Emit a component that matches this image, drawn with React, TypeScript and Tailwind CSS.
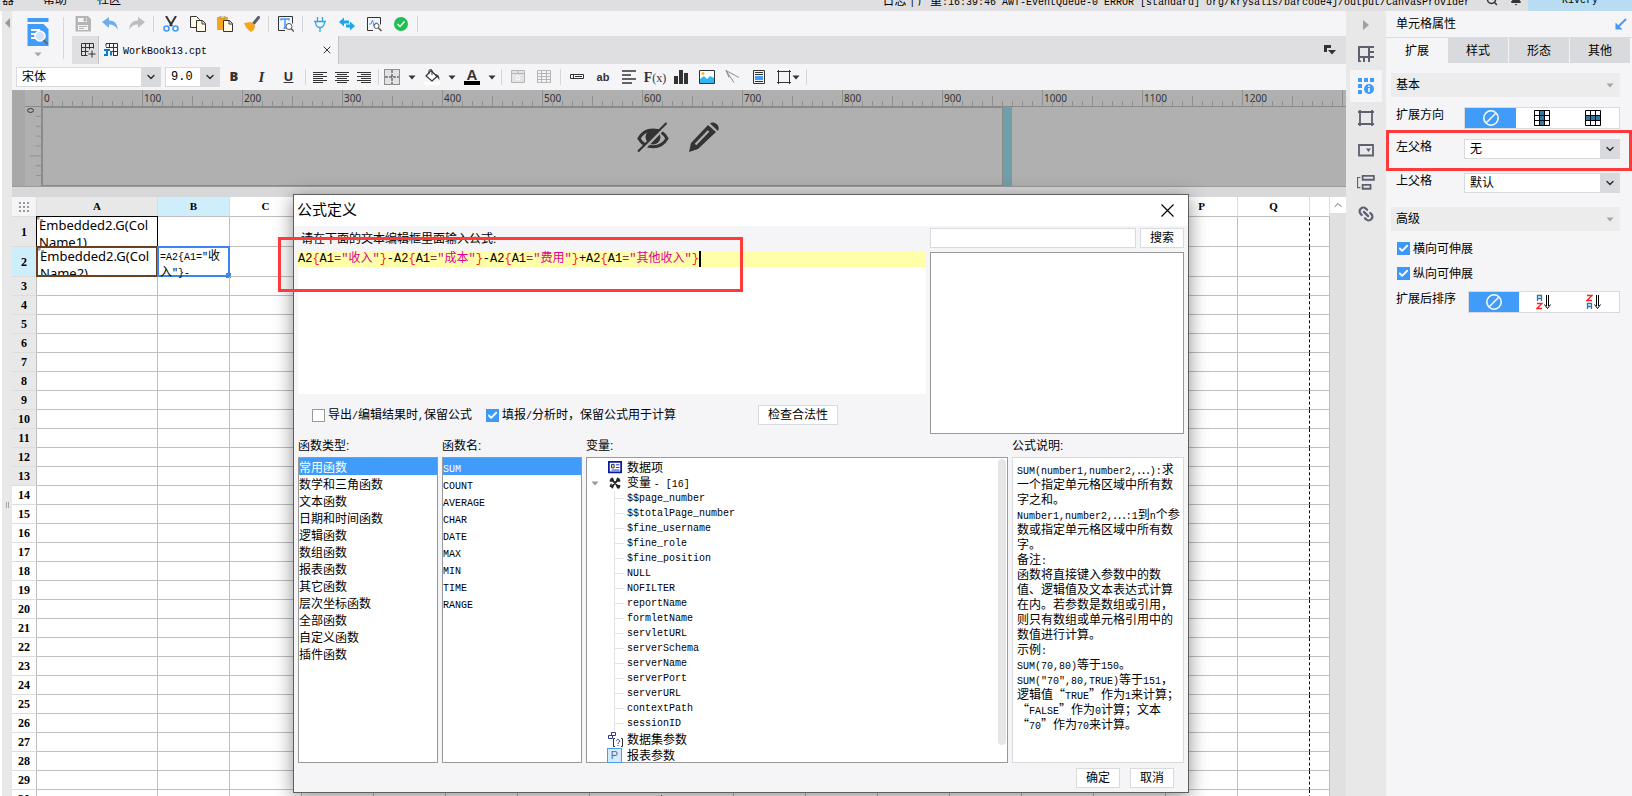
import type { ReactNode } from "react";
import { Bell, Check, ChevronDown, ChevronUp, Link2, Search, X } from "lucide-react";

const FUNCTION_TYPES = [
  "常用函数",
  "数学和三角函数",
  "文本函数",
  "日期和时间函数",
  "逻辑函数",
  "数组函数",
  "报表函数",
  "其它函数",
  "层次坐标函数",
  "全部函数",
  "自定义函数",
  "插件函数",
];

const FUNCTION_NAMES = ["SUM", "COUNT", "AVERAGE", "CHAR", "DATE", "MAX", "MIN", "TIME", "RANGE"];

const VARIABLES = [
  "$$page_number",
  "$$totalPage_number",
  "$fine_username",
  "$fine_role",
  "$fine_position",
  "NULL",
  "NOFILTER",
  "reportName",
  "formletName",
  "servletURL",
  "serverSchema",
  "serverName",
  "serverPort",
  "serverURL",
  "contextPath",
  "sessionID",
];

const DESCRIPTION = [
  "SUM(number1,number2,…):求",
  "一个指定单元格区域中所有数",
  "字之和。",
  "Number1,number2,…:1到n个参",
  "数或指定单元格区域中所有数",
  "字。",
  "备注:",
  "函数将直接键入参数中的数",
  "值、逻辑值及文本表达式计算",
  "在内。若参数是数组或引用，",
  "则只有数组或单元格引用中的",
  "数值进行计算。",
  "示例:",
  "SUM(70,80)等于150。",
  "SUM(\"70\",80,TRUE)等于151，",
  "逻辑值“TRUE”作为1来计算；",
  "“FALSE”作为0计算；文本",
  "“70”作为70来计算。",
];

const FORMULA = "A2{A1=\"收入\"}-A2{A1=\"成本\"}-A2{A1=\"费用\"}+A2{A1=\"其他收入\"}";

const COLUMNS = [..."ABCDEFGHIJKLMNOPQ", ""];
const ROWS = Array.from({ length: 30 }, (_, i) => i + 1);

/* Latin runs are set in a half-width face so that two letters take one Chinese character. */
function Mixed({ text }: { text: string }) {
  return (
    <>
      {text.split(/([\x21-\x7e]+(?: [\x21-\x7e]+)*)/).map((part, i) =>
        i % 2 ? (
          <span key={i} className="font-['Liberation_Mono',monospace] text-[10px]">
            {part}
          </span>
        ) : (
          <span key={i} className="font-['Noto_Sans_CJK_SC',sans-serif]">
            {part}
          </span>
        ),
      )}
    </>
  );
}

function Formula() {
  const parts = FORMULA.split(/("[^"]*"|[{}]|=)/);
  return (
    <>
      {parts.map((part, i) => {
        if (part.startsWith("\"")) return <span key={i} className="text-[#dc009c]">{part}</span>;
        if (part === "{" || part === "}") return <span key={i} className="text-[#ff2020]">{part}</span>;
        if (part === "=") return <span key={i} className="text-[#804040]">{part}</span>;
        return <span key={i}>{part}</span>;
      })}
    </>
  );
}

function Svg({ children, size = 16 }: { children: ReactNode; size?: number }) {
  return (
    <svg width={size} height={size} viewBox="0 0 16 16" fill="none" aria-hidden="true" className="shrink-0">
      {children}
    </svg>
  );
}

function ToolButton({ label, className, children }: { label: string; className: string; children: ReactNode }) {
  return (
    <button type="button" aria-label={label} className={`flex shrink-0 items-center justify-center ${className}`}>
      {children}
    </button>
  );
}

function Separator() {
  return (
    <div className="flex w-[7px] shrink-0 justify-center">
      <div className="h-4 w-px bg-[#d6d6d9]" />
    </div>
  );
}

function Caret({ className = "text-[#333333]" }: { className?: string }) {
  return (
    <svg width="8" height="5" viewBox="0 0 8 5" aria-hidden="true" className={className}>
      <path d="M0.500 0.500h7L4 4.500z" fill="currentColor" />
    </svg>
  );
}

function Select({ label, id, value, className }: { label: string; id: string; value: string; className: string }) {
  return (
    <div className={`relative h-5 ${className}`}>
      <select
        id={id}
        aria-label={label}
        className="h-full w-full appearance-none border border-[#d9dadd] bg-white pl-[5px] text-[12px] leading-4"
      >
        <option>{value}</option>
      </select>
      <span className="pointer-events-none absolute inset-y-0 right-0 flex w-5 items-center justify-center bg-[#d9dadd]">
        <ChevronDown className="h-3 w-3 text-[#333333]" strokeWidth={3} />
      </span>
    </div>
  );
}

function CheckBox({ id, label, checked }: { id: string; label: string; checked?: boolean }) {
  return (
    <div className="flex items-center gap-[3px]">
      <span className="relative h-[13px] w-[13px]">
        <input
          id={id}
          type="checkbox"
          defaultChecked={checked}
          className="peer block h-full w-full appearance-none border border-[#999999] bg-white checked:border-[#3d98f7] checked:bg-[#3d98f7]"
        />
        <Check className="pointer-events-none absolute inset-0 hidden h-[13px] w-[13px] p-px text-white peer-checked:block" strokeWidth={4} />
      </span>
      <label htmlFor={id} className="leading-4">
        <Mixed text={label} />
      </label>
    </div>
  );
}

function TopBar() {
  return (
    <header className="-mt-[11px] flex h-[22px] shrink-0 items-center bg-[#dfdfe1] pl-[2px]">
      <a href="#server" className="w-[41px]">器</a>
      <a href="#help" className="w-[54px]">帮助</a>
      <a href="#community">社区</a>
      <div className="flex flex-1 items-center justify-end">
        <span className="pr-4 whitespace-pre">
          <Mixed text="日志 | 严重:16:39:46 AWT-EventQueue-0 ERROR [standard] org/krysalis/barcode4j/output/CanvasProvider" />
        </span>
        <Search className="mr-3 h-3 w-3 text-[#333333]" strokeWidth={3} />
        <Bell className="mr-[6px] h-3 w-3 fill-[#333333] text-[#333333]" />
      </div>
      <div className="flex h-full w-[104px] items-center justify-center bg-[#b8dcf1]">
        <Mixed text="Rivery" />
      </div>
    </header>
  );
}

function MainToolbar() {
  return (
    <div className="flex h-[25px] items-center">
      <ToolButton label="保存" className="w-[27px]">
        <Svg>
          <path d="M1 0h12l3 3v12.500h-15.500v-15z" fill="#b5b5b5" />
          <path d="M3 2h9v4h-9zM3 9h10v5h-10z" fill="#f5f5f8" />
          <path d="M9 2h2v3h-2zM4 10.500h8M4 12.500h5" stroke="#b5b5b5" fill="#b5b5b5" />
        </Svg>
      </ToolButton>
      <ToolButton label="撤销" className="w-[27px]">
        <Svg>
          <path d="M0 6l7-5v3.500c5 0 9 3 8.500 9.500C14 10 11 8.500 7 8.500V12z" fill="#6caeec" />
        </Svg>
      </ToolButton>
      <ToolButton label="恢复" className="w-[27px]">
        <Svg>
          <path d="M16 6L9 1v3.500C4 4.500 0 7.500 0.500 14 2 10 5 8.500 9 8.500V12z" fill="#bdbdbd" />
        </Svg>
      </ToolButton>
      <Separator />
      <ToolButton label="剪切" className="w-[27px]">
        <Svg>
          <path d="M3 0l6 10M13 0L7 10" stroke="#333333" strokeWidth="2" />
          <circle cx="3.500" cy="12.500" r="2.500" stroke="#419bf9" strokeWidth="1.600" />
          <circle cx="12.500" cy="12.500" r="2.500" stroke="#419bf9" strokeWidth="1.600" />
        </Svg>
      </ToolButton>
      <ToolButton label="复制" className="w-[27px]">
        <Svg>
          <path d="M0.500 0.500h6l3 3v8h-9z" fill="#fffbe8" stroke="#333333" />
          <path d="M6.500 4.500h6l3 3v8h-9z" fill="#fffbe8" stroke="#333333" />
          <path d="M12 4.500v3.500h3.500" stroke="#333333" />
        </Svg>
      </ToolButton>
      <ToolButton label="粘贴" className="w-[27px]">
        <Svg>
          <path d="M0 1h11v13H0z" fill="#f5a71c" />
          <path d="M3 0h5v2H3z" fill="#fff" stroke="#8a5a10" strokeWidth="0.600" />
          <path d="M6.500 4.500h6l3 3v8h-9z" fill="#fffbe8" stroke="#333333" />
          <path d="M12 4.500v3.500h3.500" stroke="#333333" />
        </Svg>
      </ToolButton>
      <ToolButton label="格式刷" className="w-[27px]">
        <Svg>
          <path d="M14.500 1.500L10 7" stroke="#5a5f70" strokeWidth="3" strokeLinecap="round" />
          <path d="M0 7l7-1 4 3c0 4-2 6-4 7-3-2-6-5-7-9z" fill="#f5a71c" />
        </Svg>
      </ToolButton>
      <Separator />
      <ToolButton label="查找" className="w-[27px]">
        <Svg>
          <path d="M7 14.500H0.500V0.500h14v7" stroke="#333333" />
          <path d="M3 4.500V3h8v1.500M7 3v9M5.500 12h3" stroke="#419bf9" strokeWidth="1.500" />
          <circle cx="11" cy="10.500" r="3" fill="#fff" stroke="#555555" />
          <path d="M13 12.500l3 3" stroke="#555555" strokeWidth="1.500" />
        </Svg>
      </ToolButton>
      <Separator />
      <ToolButton label="连接" className="w-[27px]">
        <Svg>
          <path d="M5.500 1v4M10.500 1v4M2 5.500h12M3.500 5.500c0 4 1.500 6 4.500 6s4.500-2 4.500-6M8 11.500V16" stroke="#2ba5e8" strokeWidth="1.300" />
        </Svg>
      </ToolButton>
      <ToolButton label="同步" className="w-[27px]">
        <Svg>
          <path d="M0 6l5-4.500V4.500h5v3H5v3zM16 10l-5 4.500v-3H7v-3h4v-3z" fill="#1aa7ee" />
        </Svg>
      </ToolButton>
      <ToolButton label="监控" className="w-[27px]">
        <Svg>
          <path d="M7 14.500H1.500V1.500h13v7" stroke="#333333" />
          <path d="M3 8h2l1.500-4L8 10l1.500-3h2" stroke="#419bf9" />
          <circle cx="10.500" cy="10" r="2.500" fill="#fff" stroke="#555555" />
          <path d="M12.500 12l3 3" stroke="#555555" strokeWidth="1.500" />
        </Svg>
      </ToolButton>
      <ToolButton label="检测" className="w-[27px]">
        <Svg>
          <circle cx="8" cy="8" r="7" fill="#1fbf54" />
          <path d="M4.500 8l2.500 2.500 4.500-5" stroke="#fff" strokeWidth="1.500" />
        </Svg>
      </ToolButton>
      <Separator />
    </div>
  );
}

function TabBar() {
  return (
    <div className="flex h-7 items-stretch bg-[#dfdfe1]">
      <button type="button" aria-label="新建" className="flex w-[26px] items-center justify-center pl-[6px]">
        <Svg>
          <path d="M1.500 1.500h12v5M1.500 1.500v12h6M1.500 5.500h12M1.500 9.500h7M5.500 1.500v12M9.500 1.500v6M12 8.500v7M8.500 12h7" stroke="#333333" />
        </Svg>
      </button>
      <div className="flex w-[241px] items-center border-x border-[#c4c4c8] bg-[#f5f5f8] pr-[5px] pl-1">
        <Svg>
          <path d="M3 1.500h11.500v12H10M6.500 1.500v4M10.500 1.500v12M3 1.500v3M3 5.500h11.500M9 9.500h5.500" stroke="#333333" />
          <path d="M1 7h6v2H5v5H1v-2h2V9H1zM7 9h2v4.500H7z" fill="#0d79c9" />
        </Svg>
        <span className="flex-1 pl-1 leading-4">
          <Mixed text="WorkBook13.cpt" />
        </span>
        <button type="button" aria-label="关闭标签" className="flex h-3 w-3 items-center justify-center">
          <X className="h-3 w-3 text-[#333333]" strokeWidth={2} />
        </button>
      </div>
      <div className="flex flex-1 items-center justify-end pr-[9px]">
        <button type="button" aria-label="标签列表">
          <Svg>
            <path d="M3 3h7v3H6v4H3zM7 8h8l-4 4.500z" fill="#333333" />
          </Svg>
        </button>
      </div>
    </div>
  );
}

function AlignIcon({ inner }: { inner: string }) {
  return (
    <Svg>
      <path d={`M1 3.500h14M1 7.500h14M1 11.500h14${inner}`} stroke="#333333" />
    </Svg>
  );
}

function FormatBar() {
  return (
    <div className="flex h-[26px] items-center pl-1">
      <Select id="font-family" label="字体" value="宋体" className="w-[145px]" />
      <Select id="font-size" label="字号" value="9.0" className="ml-1 w-[55px] font-['Liberation_Mono',monospace]" />
      <ToolButton label="粗体" className="w-7">
        <span className="font-['Noto_Sans',sans-serif] text-[13px] font-black text-[#333333]">B</span>
      </ToolButton>
      <ToolButton label="斜体" className="w-[27px]">
        <span className="font-['Liberation_Serif',serif] text-[15px] font-bold text-[#333333] italic">I</span>
      </ToolButton>
      <ToolButton label="下划线" className="w-[27px]">
        <span className="font-['Noto_Sans',sans-serif] text-[13px] font-bold text-[#333333] underline">U</span>
      </ToolButton>
      <Separator />
      <ToolButton label="左对齐" className="w-[22px]">
        <AlignIcon inner="M1 5.500h10M1 9.500h10M1 13.500h10" />
      </ToolButton>
      <ToolButton label="居中" className="w-[22px]">
        <AlignIcon inner="M3 5.500h10M3 9.500h10M3 13.500h10" />
      </ToolButton>
      <ToolButton label="右对齐" className="w-[22px]">
        <AlignIcon inner="M5 5.500h10M5 9.500h10M5 13.500h10" />
      </ToolButton>
      <Separator />
      <div className="flex gap-1">
        <ToolButton label="边框" className="w-9 gap-2">
          <Svg>
            <path d="M0.500 0.500h15v15h-15z" fill="#e3e3e5" stroke="#333333" strokeDasharray="1 1" />
            <path d="M1 8h14M8 1v14" stroke="#333333" strokeDasharray="3 1" />
          </Svg>
          <Caret />
        </ToolButton>
        <ToolButton label="背景色" className="w-9 gap-2">
          <Svg>
            <path d="M7 1.500l6 6-5 4.500-6-5z" fill="#fff" stroke="#333333" strokeWidth="1.200" />
            <path d="M5 5V1.500c0-1.500 3-1.500 3 0V6" stroke="#333333" />
            <path d="M11 5c3 0 4.500 2 4.500 6l-2-2.500z" fill="#333333" />
            <path d="M0 13h16v3H0z" fill="#fff" />
          </Svg>
          <Caret />
        </ToolButton>
        <ToolButton label="字体颜色" className="w-9 gap-2">
          <span className="flex h-4 w-4 items-center justify-center border-b-4 border-black text-[15px] leading-3 font-bold text-[#333333]">A</span>
          <Caret />
        </ToolButton>
      </div>
      <Separator />
      <ToolButton label="合并" className="w-[26px]">
        <Svg>
          <path d="M1.500 1.500h13v12h-13zM1.500 4.500h13M8 1.500v3" fill="#e3e3e5" stroke="#b5b5b5" />
          <circle cx="8" cy="9" r="2" stroke="#ffffff" />
        </Svg>
      </ToolButton>
      <ToolButton label="拆分" className="w-[26px]">
        <Svg>
          <path d="M1.500 1.500h13v12h-13zM1.500 4.500h13M1.500 7.500h13M1.500 10.500h13M5.500 1.500v12M10.500 1.500v12" stroke="#b5b5b5" />
        </Svg>
      </ToolButton>
      <Separator />
      <ToolButton label="控件" className="w-[26px]">
        <Svg>
          <path d="M1.500 5.500h13v4h-13zM4.500 5.500v4M6 7.500h7" stroke="#333333" />
        </Svg>
      </ToolButton>
      <ToolButton label="文本" className="w-[26px]">
        <span className="text-[11px] font-bold text-[#333333]">ab</span>
      </ToolButton>
      <ToolButton label="富文本" className="w-[26px]">
        <Svg>
          <path d="M1 2h14M1 6h9M1 10h14M1 14h10" stroke="#333333" strokeWidth="1.500" />
        </Svg>
      </ToolButton>
      <ToolButton label="公式" className="w-[26px]">
        <span className="font-['Liberation_Serif',serif] text-[#333333]">
          <span className="text-[14px] font-bold">F</span>
          <span className="text-[12px]">(x)</span>
        </span>
      </ToolButton>
      <ToolButton label="图表" className="w-[26px]">
        <Svg>
          <path d="M1 7h4v8H1zM6 1h4v14H6zM11 4h4v11h-4z" fill="#333333" />
        </Svg>
      </ToolButton>
      <ToolButton label="图片" className="w-[26px]">
        <Svg>
          <path d="M0.500 1.500h15v13H0.500z" fill="#fff" stroke="#333333" />
          <path d="M1 14v-4l4-3 3 3 3-3 4 2v5z" fill="#2fb5f5" />
          <circle cx="4" cy="4.500" r="1.500" fill="#f7b733" />
        </Svg>
      </ToolButton>
      <ToolButton label="斜线" className="w-[26px]">
        <Svg>
          <path d="M1 1.500l13 7M1 1.500l8 12M1 1.500l3 7" stroke="#8c8c8c" />
        </Svg>
      </ToolButton>
      <ToolButton label="子报表" className="w-[26px]">
        <Svg>
          <path d="M2.500 1.500h11v13h-11zM4 3.500h8M4 5.500h8M4 12.500h8" stroke="#333333" />
          <path d="M4 7h8v4H4z" fill="#419bf9" />
        </Svg>
      </ToolButton>
      <ToolButton label="形状" className="w-[31px]">
        <Svg>
          <path d="M2.500 1v14M13.500 1v14M1 2.500h14M1 13.500h14" stroke="#333333" />
        </Svg>
        <Caret />
      </ToolButton>
      <Separator />
    </div>
  );
}

function Ruler() {
  const ticks = Array.from({ length: 140 }, (_, i) => i);
  const path = ticks
    .map((i) => `M${i * 10 + 0.5} ${i % 10 === 0 ? 0 : i % 5 === 0 ? 6 : 11}V16`)
    .join("");
  return (
    <div className="relative h-[17px] overflow-hidden border-b border-[#8a8a8a]">
      <svg height="16" width="1400" viewBox="0 0 1400 16" aria-hidden="true" className="absolute top-0 left-0">
        <path d={path} stroke="#8f8f8f" />
      </svg>
      <div className="flex font-['Noto_Sans',sans-serif] text-[10px] leading-4 text-[#333333]">
        {ticks.slice(0, 13).map((i) => (
          <span key={i} className="w-[100px] shrink-0 pl-[2px]">
            {i * 100}
          </span>
        ))}
      </div>
    </div>
  );
}

function Canvas() {
  return (
    <section className="flex h-[97px] shrink-0 overflow-hidden border-b border-[#999999] bg-[#a8a8a8] pl-[13px]">
      <div className="w-4 shrink-0 bg-[#b0b0b0] pt-4">
        <svg width="16" height="80" viewBox="0 0 16 80" aria-hidden="true" className="border-t border-[#8a8a8a]">
          <path d="M11 9.500h5M11 19.500h5M11 29.500h5M11 39.500h5M5 49.500h11M11 59.500h5M11 69.500h5" stroke="#8f8f8f" />
          <ellipse cx="5.500" cy="3.500" rx="3" ry="2" fill="none" stroke="#333333" />
        </svg>
      </div>
      <div className="flex min-w-0 flex-1 flex-col border-l border-[#8a8a8a] bg-[#b0b0b0]">
        <Ruler />
        <div className="flex flex-1">
          <div className="flex w-[961px] items-center justify-center gap-[19px] border border-[#8a8a8a] pb-5 pl-[312px]">
            <button type="button" aria-label="隐藏" className="text-[#333333]">
              <svg width="32" height="30" viewBox="0 0 32 30" fill="none" aria-hidden="true">
                <path d="M2 16.500C8 5 24 5 30 16.500 24 27.500 8 27.500 2 16.500z" stroke="currentColor" strokeWidth="3" />
                <circle cx="16" cy="15" r="7.500" fill="currentColor" />
                <path d="M2.500 31L31 2" stroke="#b0b0b0" strokeWidth="3" />
                <path d="M1 29.500L29.500 1" stroke="currentColor" strokeWidth="2.200" />
              </svg>
            </button>
            <button type="button" aria-label="编辑" className="text-[#333333]">
              <svg width="32" height="30" viewBox="0 0 32 30" fill="none" aria-hidden="true">
                <path d="M1 30l2-9L20 3l8 7L10 27z" fill="currentColor" />
                <path d="M7.500 22.500L20.500 9" stroke="#b0b0b0" strokeWidth="2.200" />
                <path d="M22 1.500c3-3 11 1 8 7.500z" fill="currentColor" />
              </svg>
            </button>
          </div>
          <div className="w-[9px] bg-[#6f9fac]" />
        </div>
      </div>
    </section>
  );
}

function HeaderCell({ name }: { name: string }) {
  const tone = name === "B" ? "bg-[#cfeefb]" : name === "A" ? "bg-[#e8e8e8]" : "bg-white";
  return (
    <th className={`border-r border-b border-r-[#dcdcdc] border-b-[#bfbfbf] p-0 font-['Liberation_Serif',serif] text-[11px] font-bold ${tone}`}>
      {name}
    </th>
  );
}

function CellContent({ cell }: { cell: string }) {
  if (cell === "A1" || cell === "A2") {
    return (
      <div
        className={`absolute -inset-px overflow-hidden pl-[2px] font-['Noto_Sans',sans-serif] text-[13px] leading-[17px] whitespace-nowrap ${
          cell === "A1" ? "border border-black" : "border-2 border-[#6b4020]"
        }`}
      >
        Embedded2.G(Col
        <br />
        Name{cell === "A1" ? "1" : "2"})
        <svg width="6" height="6" viewBox="0 0 6 6" aria-hidden="true" className="absolute top-0 left-0">
          <path d="M0 1h3M1 0v3M3 3l3 0M5 2v3" stroke="#777777" />
        </svg>
      </div>
    );
  }
  if (cell === "B2") {
    return (
      <div className="absolute -inset-px border-2 border-[#3a85f0] pl-px text-[12px] leading-[13px]">
        <Mixed text={"=A2{A1=\"收"} />
        <br />
        <Mixed text={"入\"}-"} />
        <span className="absolute -right-[3px] -bottom-[3px] h-[5px] w-[5px] bg-[#3a85f0]" />
      </div>
    );
  }
  return null;
}

function Sheet() {
  return (
    <div className="flex min-h-0 flex-1 bg-white">
      <div className="min-w-0 flex-1 overflow-hidden">
        <table className="w-full table-fixed border-separate border-spacing-0">
          <colgroup>
            <col className="w-[25px]" />
            <col className="w-[121px]" />
            {COLUMNS.slice(1, -1).map((c) => (
              <col key={c} className="w-[72px]" />
            ))}
            <col />
          </colgroup>
          <thead>
            <tr className="h-5">
              <th className="border-r border-b border-[#dcdcdc] bg-[#f5f5f8] p-0">
                <svg width="12" height="10" viewBox="0 0 12 10" aria-label="全选" className="mx-auto">
                  <path d="M1 1h2M5 1h2M9 1h2M1 5h2M5 5h2M9 5h2M1 9h2M5 9h2M9 9h2" stroke="#999999" strokeWidth="2" />
                </svg>
              </th>
              {COLUMNS.map((c) => (
                <HeaderCell key={c} name={c} />
              ))}
            </tr>
          </thead>
          <tbody>
            {ROWS.map((r) => (
              <tr key={r} className={r < 3 ? "h-[30px]" : "h-[19px]"}>
                <th
                  className={`border-r border-b border-r-[#bfbfbf] border-b-[#dcdcdc] p-0 font-['Liberation_Serif',serif] text-[12px] leading-4 font-bold ${
                    r === 2 ? "bg-[#cfeefb]" : r < 14 ? "bg-[#e8e8e8]" : "bg-white"
                  }`}
                >
                  {r}
                </th>
                {COLUMNS.map((c) => (
                  <td
                    key={c}
                    className={`relative border-r border-b border-b-[#bfbfbf] p-0 ${
                      c === "Q" || c === "H" ? "border-r-black [border-right-style:dashed]" : "border-r-[#bfbfbf]"
                    }`}
                  >
                    <CellContent cell={c + r} />
                  </td>
                ))}
              </tr>
            ))}
          </tbody>
        </table>
      </div>
      <div className="w-4 bg-[#e0e0e0]">
        <button type="button" aria-label="向上滚动" className="flex h-4 w-full items-center justify-center bg-white">
          <ChevronUp className="h-3 w-3 text-[#666666]" strokeWidth={2} />
        </button>
      </div>
    </div>
  );
}

function Editor() {
  return (
    <main className="flex min-w-0 flex-1 flex-col bg-[#f5f5f8]">
      <div className="flex">
        <div className="flex w-[57px] justify-end pt-[6px]">
          <button type="button" aria-label="预览" className="flex flex-1 flex-col items-center gap-[6px]">
            <svg width="22" height="29" viewBox="0 0 22 29" fill="none" aria-hidden="true">
              <path d="M0.500 1h21v4H0.500zM0.500 7h16l5 5v17H0.500z" fill="#419bf9" />
              <path d="M4 13h9M4 17h5M4 21h5" stroke="#fff" strokeWidth="2" />
              <circle cx="13" cy="19" r="5" fill="#cfe4fb" stroke="#fff" strokeWidth="1.500" />
              <path d="M16.500 23l4 4" stroke="#5f6b7a" strokeWidth="2" />
            </svg>
            <Caret className="text-[#a5a5a5]" />
          </button>
          <div className="mr-[5px] h-[42px] w-px bg-[#d6d6d9]" />
        </div>
        <div className="min-w-0 flex-1">
          <MainToolbar />
          <div className="pl-[3px]">
            <TabBar />
          </div>
        </div>
      </div>
      <FormatBar />
      <Canvas />
      <div className="h-[10px] shrink-0 bg-[#d8d8da]" />
      <Sheet />
    </main>
  );
}

function SideIcons() {
  return (
    <nav className="flex w-10 shrink-0 flex-col items-center bg-[#e8e8e8] text-[#5c6070]">
      <button type="button" aria-label="收起" className="flex h-[27px] items-center">
        <svg width="6" height="10" viewBox="0 0 6 10" aria-hidden="true">
          <path d="M0 0l6 5-6 5z" fill="#a0a0a0" />
        </svg>
      </button>
      <ToolButton label="单元格元素" className="h-8 w-8">
        <Svg>
          <path d="M1 16V1h15M1 11h10V1M11 6h5M11 11h5M6 11v5M11 11v5M1 15.500h2" stroke="currentColor" strokeWidth="2" />
        </Svg>
      </ToolButton>
      <ToolButton label="单元格属性" className="h-8 w-8 bg-[#f5f5f8]">
        <Svg>
          <path d="M0 0h4v4H0zM6 0h4v4H6zM12 0h4v4h-4zM0 6h4v4H0zM0 12h4v4H0z" fill="#419bf9" />
          <circle cx="11" cy="11" r="5" fill="#419bf9" />
          <path d="M11 7.500v1.500M11 10v4" stroke="#fff" strokeWidth="1.600" />
        </Svg>
      </ToolButton>
      <ToolButton label="悬浮元素" className="h-8 w-8">
        <Svg>
          <path d="M2 0v16M14 0v16M0 2h16M0 14h16" stroke="currentColor" strokeWidth="1.800" />
        </Svg>
      </ToolButton>
      <ToolButton label="控件设置" className="h-8 w-8">
        <Svg>
          <path d="M1 3h14v10.500H1z" stroke="currentColor" strokeWidth="1.800" />
          <path d="M8 6.500h5l-2.500 3.500z" fill="currentColor" />
        </Svg>
      </ToolButton>
      <ToolButton label="条件属性" className="h-8 w-8">
        <Svg size={18}>
          <path d="M3 4H0.500v9H3" stroke="currentColor" />
          <path d="M5 2.500h10v3.500H5zM5 10.500h7v3.500H5z" stroke="currentColor" strokeWidth="1.600" />
        </Svg>
      </ToolButton>
      <ToolButton label="超级链接" className="h-8 w-8">
        <Link2 className="h-[18px] w-[18px] rotate-45" strokeWidth={3} />
      </ToolButton>
    </nav>
  );
}

function SectionTitle({ children }: { children: ReactNode }) {
  return (
    <button type="button" className="flex h-6 w-full items-center justify-between bg-[#ececec] pr-[6px] pl-[5px] text-left">
      {children}
      <Caret className="text-[#a5a5a5]" />
    </button>
  );
}

function Segments({ children, className }: { children: ReactNode; className: string }) {
  return (
    <div className={`flex h-[22px] border border-[#d9dadd] bg-white ${className}`}>
      <button type="button" aria-label="不扩展" className="flex flex-1 items-center justify-center bg-[#419bf9]">
        <Svg>
          <circle cx="8" cy="8" r="7.200" stroke="#fff" strokeWidth="1.500" />
          <path d="M3.500 12.500l9-9" stroke="#fff" strokeWidth="1.500" />
        </Svg>
      </button>
      {children}
    </div>
  );
}

function SortIcon({ reverse }: { reverse?: boolean }) {
  const a = "M1.500 7V1.500h4V7M1.500 4.500h4";
  const z = "M1 1.500h5L1 6.500h5";
  return (
    <Svg>
      <path d={reverse ? z : a} stroke={reverse ? "#ff2020" : "#2f78a8"} strokeWidth="1.300" />
      <g transform="translate(0 8)">
        <path d={reverse ? a : z} stroke={reverse ? "#2f78a8" : "#ff2020"} strokeWidth="1.300" />
      </g>
      <path d="M10.500 1v11M12.500 1v11M8.500 10.500l3 4 3-4" stroke="#000" />
    </Svg>
  );
}

function PropertyPanel() {
  return (
    <aside className="w-[246px] shrink-0 bg-[#f5f5f8]">
      <div className="flex h-[27px] items-center justify-between border-b border-[#dcdcdf] pr-[5px] pl-[10px]">
        <h2>单元格属性</h2>
        <svg width="12" height="12" viewBox="0 0 12 12" fill="none" aria-hidden="true">
          <path d="M11 1L3 9" stroke="#419bf9" strokeWidth="2" />
          <path d="M0.500 4.500v7h7z" fill="#419bf9" />
        </svg>
      </div>
      <div className="flex h-[25px] gap-px pr-[2px] pl-px" role="tablist">
        <button type="button" role="tab" aria-selected="true" className="flex-1">扩展</button>
        {["样式", "形态", "其他"].map((tab) => (
          <button key={tab} type="button" role="tab" aria-selected="false" className="flex-1 bg-[#d9dadd]">
            {tab}
          </button>
        ))}
      </div>
      <div className="pt-[10px] pr-3 pl-[5px]">
        <SectionTitle>基本</SectionTitle>
        <div className="flex items-start pt-[10px] pl-[5px]">
          <span className="w-[68px] leading-4">扩展方向</span>
          <Segments className="flex-1">
            <button type="button" aria-label="纵向" className="flex flex-1 items-center justify-center">
              <Svg>
                <path d="M5.500 0h5v16h-5z" fill="#2f78a8" />
                <path d="M0.500 0.500h15v15H0.500zM5.500 0.500v15M10.500 0.500v15M0.500 5.500h15M0.500 10.500h15" stroke="#000" />
              </Svg>
            </button>
            <button type="button" aria-label="横向" className="flex flex-1 items-center justify-center">
              <Svg>
                <path d="M0 5.500h16v5H0z" fill="#2f78a8" />
                <path d="M0.500 0.500h15v15H0.500zM5.500 0.500v15M10.500 0.500v15M0.500 5.500h15M0.500 10.500h15" stroke="#000" />
              </Svg>
            </button>
          </Segments>
        </div>
      </div>
      <div className="mt-px h-[41px] border-[3px] border-[#ff3a3a] pt-[6px] pr-[9px] pl-[7px]">
        <div className="flex items-start">
          <label htmlFor="left-parent" className="w-[68px] leading-4">左父格</label>
          <Select id="left-parent" label="左父格" value="无" className="flex-1" />
        </div>
      </div>
      <div className="pt-[2px] pr-3 pl-[5px]">
        <div className="flex items-start pb-[14px] pl-[5px]">
          <label htmlFor="top-parent" className="w-[68px] leading-4">上父格</label>
          <Select id="top-parent" label="上父格" value="默认" className="flex-1" />
        </div>
        <SectionTitle>高级</SectionTitle>
        <div className="flex flex-col gap-2 pt-[9px] pl-[6px]">
          <CheckBox id="extend-h" label="横向可伸展" checked />
          <CheckBox id="extend-v" label="纵向可伸展" checked />
        </div>
        <div className="flex items-start pt-[9px] pl-[5px]">
          <span className="w-[72px] leading-4">扩展后排序</span>
          <Segments className="flex-1">
            <button type="button" aria-label="升序" className="flex flex-1 items-center justify-center">
              <SortIcon />
            </button>
            <button type="button" aria-label="降序" className="flex flex-1 items-center justify-center">
              <SortIcon reverse />
            </button>
          </Segments>
        </div>
      </div>
    </aside>
  );
}

function OptionList({ items }: { items: string[] }) {
  return (
    <ul className="h-[306px] border border-[#999999] bg-white">
      {items.map((item, i) => (
        <li key={item}>
          <button
            type="button"
            className={`block h-[17px] w-full text-left leading-[17px] ${i === 0 ? "bg-[#419bf9] text-white" : ""}`}
          >
            <Mixed text={item} />
          </button>
        </li>
      ))}
    </ul>
  );
}

function TreeRow({ icon, label, open }: { icon: ReactNode; label: string; open?: boolean }) {
  return (
    <div className="flex h-4 items-center">
      <span className="flex w-[15px] justify-center">{open && <Caret className="text-[#999999]" />}</span>
      <span className="flex w-[25px] justify-center">{icon}</span>
      <span className="leading-4">
        <Mixed text={label} />
      </span>
    </div>
  );
}

function VariableTree() {
  return (
    <div className="flex h-[306px] justify-between border border-[#999999] bg-white pr-px">
      <div className="pt-px">
        <TreeRow
          label="数据项"
          icon={
            <Svg size={14}>
              <path d="M1 2h14v12H1z" fill="#fff" stroke="#0a1aa0" strokeWidth="2" />
              <path d="M4 5h3v4H4z" fill="#f4e04d" stroke="#0a1aa0" />
              <path d="M9 5.500h4M9 8.500h4M4 11.500h9" stroke="#0a1aa0" />
            </Svg>
          }
        />
        <TreeRow
          open
          label="变量 - [16]"
          icon={
            <Svg size={12}>
              <path d="M4 1l2 5 4 4 2 5M12 1l-2 5-4 4-2 5M1 5h4M11 5h4M1 12h4M11 12h4" stroke="#222222" strokeWidth="2.500" />
              <circle cx="3" cy="3" r="1.500" fill="#222222" />
              <circle cx="13" cy="3" r="1.500" fill="#222222" />
              <circle cx="3" cy="10" r="1.500" fill="#2a6a4a" />
              <circle cx="13" cy="14" r="1.500" fill="#222222" />
            </Svg>
          }
        />
        <ul className="ml-[27px] border-l border-[#e3e3e3]">
          {VARIABLES.map((name) => (
            <li key={name} className="flex h-[15px] items-center">
              <span className="mr-[3px] h-px w-[9px] bg-[#e3e3e3]" />
              <Mixed text={name} />
            </li>
          ))}
        </ul>
        <TreeRow
          label="数据集参数"
          icon={
            <Svg>
              <path d="M4.500 1.500h4v3h-4zM1.500 4.500h4v3h-4z" stroke="#2f3a9a" fill="#fff" />
              <path d="M8 7.500H6.500v8H8M14 7.500h1.500v8H14" stroke="#333333" />
              <path d="M9.500 10c0-2 3-2 3 0s-1.500 1-1.500 3M11 14v1" stroke="#2f3a9a" />
            </Svg>
          }
        />
        <TreeRow
          label="报表参数"
          icon={
            <span className="flex h-[15px] w-[15px] items-center justify-center border border-[#419bf9] bg-[#d5ebfb] text-[11px] leading-3 text-[#5f6b7a]">
              P
            </span>
          }
        />
      </div>
      <div className="mt-px h-[286px] w-2 rounded bg-[#e6e6e6]" />
    </div>
  );
}

function DialogButton({ children, className }: { children: ReactNode; className: string }) {
  return (
    <button type="button" className={`h-5 shrink-0 border border-[#d9dadd] bg-white leading-4 ${className}`}>
      {children}
    </button>
  );
}

function FormulaDialog() {
  return (
    <div
      role="dialog"
      aria-label="公式定义"
      className="absolute top-[194px] left-[293px] w-[896px] border border-[#5f5f5f] bg-[#f5f5f8] shadow-[0_4px_18px_rgba(0,0,0,0.45)]"
    >
      <div className="flex h-[31px] items-center justify-between bg-white pr-[14px] pl-[3px]">
        <h1 className="text-[15px]">公式定义</h1>
        <button type="button" aria-label="关闭">
          <svg width="13" height="13" viewBox="0 0 13 13" aria-hidden="true">
            <path d="M0.500 0.500l12 12M12.500 0.500l-12 12" stroke="#000" strokeWidth="1.200" />
          </svg>
        </button>
      </div>
      <div className="flex gap-1 px-1">
        <div className="min-w-0 flex-1">
          <p className="h-[25px] pl-[3px] leading-[26px]">请在下面的文本编辑框里面输入公式:</p>
          <div
            role="textbox"
            aria-label="公式"
            contentEditable
            suppressContentEditableWarning
            className="h-[143px] bg-white font-['Liberation_Mono','Noto_Sans_CJK_SC',monospace] text-[12px] leading-4"
          >
            <div className="flex h-4 items-center bg-[#ffffaa]">
              <span className="h-4 border-r-2 border-black whitespace-pre">
                <Formula />
              </span>
            </div>
          </div>
          <div className="flex h-[42px] items-center pl-[14px]">
            <CheckBox id="keep-on-export" label="导出/编辑结果时,保留公式" />
            <div className="ml-[14px] flex-1">
              <CheckBox id="keep-for-calc" label="填报/分析时，保留公式用于计算" checked />
            </div>
            <DialogButton className="mr-[88px] w-20">检查合法性</DialogButton>
          </div>
        </div>
        <div className="w-[254px] pt-[2px]">
          <div className="flex h-5 gap-1">
            <input type="text" aria-label="搜索内容" className="min-w-0 flex-1 border border-[#d9dadd] bg-white px-1" />
            <DialogButton className="w-11">搜索</DialogButton>
          </div>
          <div className="mt-1 h-[182px] border border-[#999999] bg-white" />
        </div>
      </div>
      <div className="flex gap-1 px-1">
        <section className="w-[140px]">
          <h3 className="h-[21px] leading-5">函数类型:</h3>
          <OptionList items={FUNCTION_TYPES} />
        </section>
        <section className="w-[140px]">
          <h3 className="h-[21px] leading-5">函数名:</h3>
          <OptionList items={FUNCTION_NAMES} />
        </section>
        <section className="min-w-0 flex-1">
          <h3 className="h-[21px] leading-5">变量:</h3>
          <VariableTree />
        </section>
        <section className="w-[172px]">
          <h3 className="h-[21px] leading-5">公式说明:</h3>
          <div className="h-[306px] border border-[#d9dadd] bg-white pt-[3px] pl-1">
            {DESCRIPTION.map((line) => (
              <p key={line} className="h-[15px] leading-[15px] whitespace-nowrap">
                <Mixed text={line} />
              </p>
            ))}
          </div>
        </section>
      </div>
      <div className="flex h-[29px] items-center justify-end gap-[10px] pr-[14px]">
        <DialogButton className="w-11">确定</DialogButton>
        <DialogButton className="w-11">取消</DialogButton>
      </div>
    </div>
  );
}

export default function App() {
  return (
    <div className="relative flex h-screen flex-col overflow-hidden bg-[#e8e8e8] font-['Liberation_Sans','Noto_Sans_CJK_SC',sans-serif] text-[12px] text-black">
      <TopBar />
      <div className="flex min-h-0 flex-1">
        <div className="flex w-3 shrink-0 flex-col items-center justify-between border-l-2 border-white bg-[#e8e8e8] pt-[7px] pb-[288px]">
          <svg width="5" height="10" viewBox="0 0 5 10" aria-hidden="true">
            <path d="M5 0L0 5l5 5z" fill="#999999" />
          </svg>
          <div className="h-[6px] w-[3px] border-x border-[#a5a5a5]" />
        </div>
        <Editor />
        <SideIcons />
        <PropertyPanel />
      </div>
      <FormulaDialog />
      <div className="pointer-events-none absolute top-[237px] left-[278px] h-[55px] w-[465px] border-[3px] border-[#ff3a3a]" />
    </div>
  );
}
